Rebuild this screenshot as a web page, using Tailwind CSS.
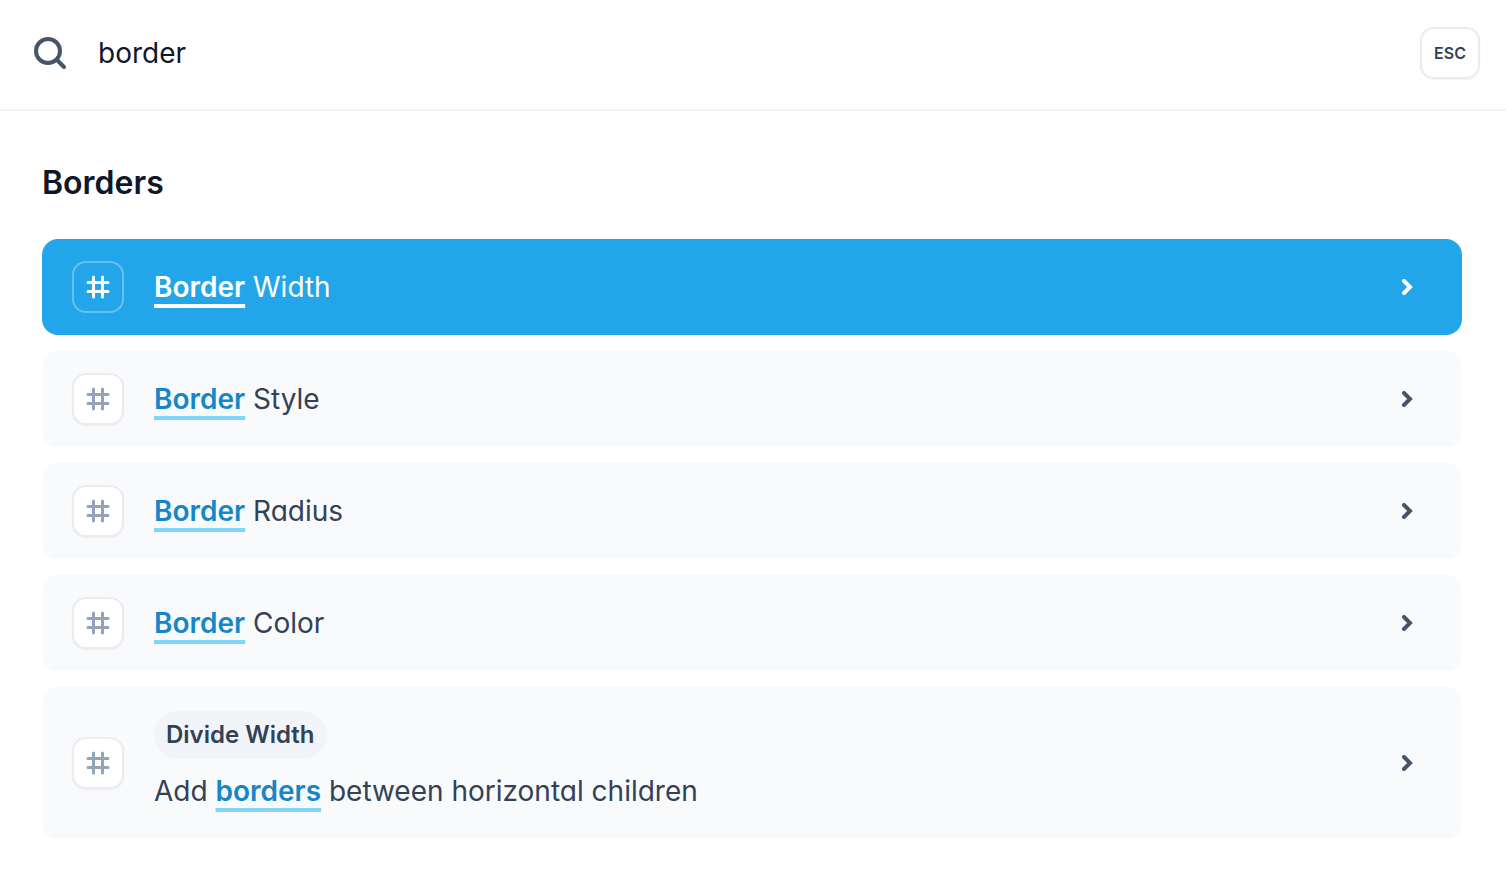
<!DOCTYPE html>
<html lang="en">
<head>
<meta charset="utf-8">
<meta name="viewport" content="width=device-width, initial-scale=1">
<title>Search</title>
<script src="https://cdn.jsdelivr.net/npm/@tailwindcss/browser@4"></script>
</head>
<body class="min-h-screen bg-white font-['Inter',sans-serif] [font-feature-settings:'cv02','cv03','cv04','cv11'] text-[28px] leading-[48px] text-[#334155] antialiased">
<svg class="hidden">
  <symbol id="hash" viewBox="0 0 12 12"><path d="M3.75 1v10M8.25 1v10M1 3.75h10M1 8.25h10" fill="none" stroke="currentColor" stroke-width="1.5" stroke-linecap="round"/></symbol>
  <symbol id="chevron" viewBox="0 0 6 8"><path d="M1 1l3 3-3 3" fill="none" stroke="currentColor" stroke-width="2" stroke-linecap="round"/></symbol>
</svg>
<header class="flex items-center border-b-2 border-[#f1f5f9] pt-[27px] pr-[26px] pb-[30px] pl-[26px]">
  <label for="q" class="shrink-0 text-[#475569]" aria-label="Search">
    <svg class="size-12" viewBox="0 0 24 24" fill="none" stroke="currentColor" stroke-width="2" stroke-linecap="round" stroke-linejoin="round"><path d="m19 19-3.5-3.5"/><circle cx="11" cy="11" r="6"/></svg>
  </label>
  <input id="q" type="text" value="border" class="ml-6 h-12 min-w-0 flex-1 text-[28px] text-[#0f172a] outline-none">
  <button type="button" class="h-[52px] w-[60px] rounded-[14px] border-2 border-[#ebebed] bg-white text-base font-semibold text-[#334155] shadow-xs">ESC</button>
</header>
<main class="pt-12 pr-11 pb-12 pl-[42px]">
  <h2 class="text-[32px] font-semibold text-[#0f172a]">Borders</h2>
  <ul class="mt-8 flex flex-col gap-4">
    <li><a href="#border-width" class="flex items-center rounded-2xl bg-[#22a6e9] py-[22px] pr-12 pl-[30px] text-white">
      <span class="flex size-[52px] items-center justify-center rounded-[14px] border-2 border-[#64c1f0]"><svg class="size-6"><use href="#hash"/></svg></span>
      <span class="ml-[30px] flex-1"><mark class="bg-transparent font-semibold text-white underline decoration-4 underline-offset-[7px]">Border</mark> Width</span>
      <svg class="h-4 w-3"><use href="#chevron"/></svg>
    </a></li>
    <li><a href="#border-style" class="flex items-center rounded-2xl bg-[#f8fafc] py-[22px] pr-12 pl-[30px]">
      <span class="flex size-[52px] items-center justify-center rounded-[14px] border-2 border-[#ebecf0] bg-white text-[#94a3b8] shadow-xs"><svg class="size-6"><use href="#hash"/></svg></span>
      <span class="ml-[30px] flex-1"><mark class="bg-transparent font-semibold text-[#1587c8] underline decoration-[#80d5fb] decoration-4 underline-offset-[7px]">Border</mark> Style</span>
      <svg class="h-4 w-3 text-[#475569]"><use href="#chevron"/></svg>
    </a></li>
    <li><a href="#border-radius" class="flex items-center rounded-2xl bg-[#f8fafc] py-[22px] pr-12 pl-[30px]">
      <span class="flex size-[52px] items-center justify-center rounded-[14px] border-2 border-[#ebecf0] bg-white text-[#94a3b8] shadow-xs"><svg class="size-6"><use href="#hash"/></svg></span>
      <span class="ml-[30px] flex-1"><mark class="bg-transparent font-semibold text-[#1587c8] underline decoration-[#80d5fb] decoration-4 underline-offset-[7px]">Border</mark> Radius</span>
      <svg class="h-4 w-3 text-[#475569]"><use href="#chevron"/></svg>
    </a></li>
    <li><a href="#border-color" class="flex items-center rounded-2xl bg-[#f8fafc] py-[22px] pr-12 pl-[30px]">
      <span class="flex size-[52px] items-center justify-center rounded-[14px] border-2 border-[#ebecf0] bg-white text-[#94a3b8] shadow-xs"><svg class="size-6"><use href="#hash"/></svg></span>
      <span class="ml-[30px] flex-1"><mark class="bg-transparent font-semibold text-[#1587c8] underline decoration-[#80d5fb] decoration-4 underline-offset-[7px]">Border</mark> Color</span>
      <svg class="h-4 w-3 text-[#475569]"><use href="#chevron"/></svg>
    </a></li>
    <li><a href="#divide-width" class="flex items-center rounded-2xl bg-[#f8fafc] py-6 pr-12 pl-[30px]">
      <span class="flex size-[52px] shrink-0 items-center justify-center rounded-[14px] border-2 border-[#ebecf0] bg-white text-[#94a3b8] shadow-xs"><svg class="size-6"><use href="#hash"/></svg></span>
      <span class="ml-[30px] flex flex-1 flex-col items-start gap-2">
        <span class="rounded-full bg-[#f1f5f9] px-3 text-2xl/[48px] font-semibold">Divide Width</span>
        <span>Add <mark class="bg-transparent font-semibold text-[#1587c8] underline decoration-[#80d5fb] decoration-4 underline-offset-[7px]">borders</mark> between horizontal children</span>
      </span>
      <svg class="h-4 w-3 text-[#475569]"><use href="#chevron"/></svg>
    </a></li>
  </ul>
</main>
</body>
</html>
